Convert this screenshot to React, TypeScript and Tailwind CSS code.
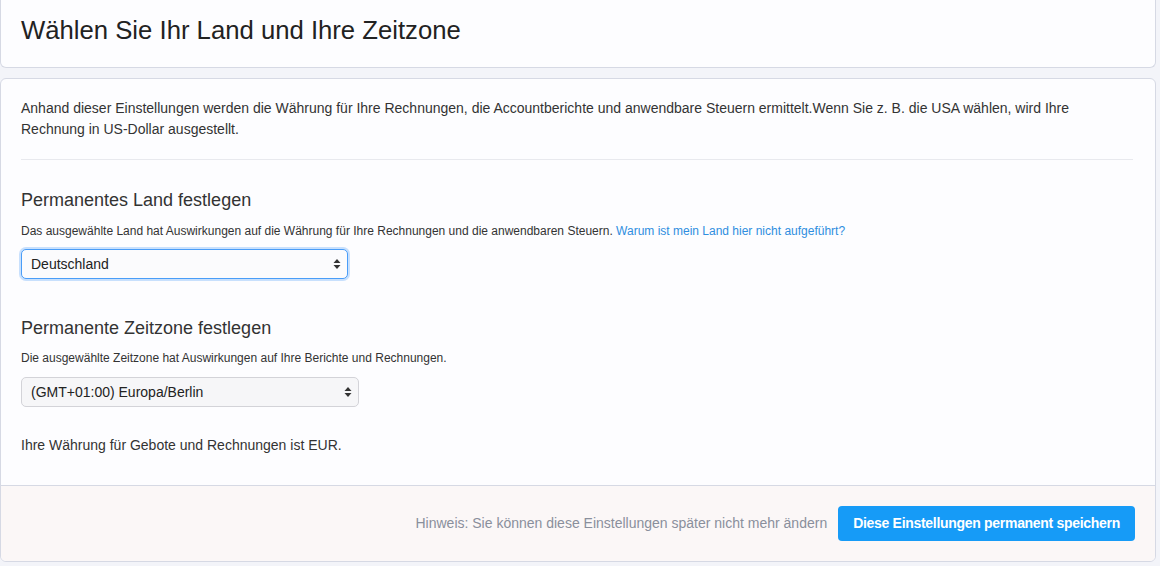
function Arrows() {
  return (
    <svg width="8" height="12" viewBox="0 0 8 12" className="shrink-0" aria-hidden>
      <path d="M4 1 L7.5 5 H0.5 Z" fill="#333" />
      <path d="M4 11 L7.5 7 H0.5 Z" fill="#333" />
    </svg>
  );
}

function FakeSelect({ value, focused = false, width }: { value: string; focused?: boolean; width: string }) {
  return (
    <div
      className={`flex h-[30px] items-center justify-between rounded-[5px] border pl-[9px] pr-[6px] text-[14px] text-[#222] ${width} ${
        focused
          ? "border-[#4a9df8] bg-[#fbfbfd] shadow-[0_0_0_2px_rgba(120,180,250,0.4)]"
          : "border-[#d3d3d8] bg-[#f6f6f8]"
      }`}
    >
      <span>{value}</span>
      <Arrows />
    </div>
  );
}

export default function App() {
  return (
    <div className="h-[566px] w-[1160px] overflow-hidden bg-[#f3f4f9] font-['Liberation_Sans',Arial,sans-serif] text-[#333]">
      <div className="w-[1156px]">
        <section className="h-[68px] rounded-b-[6px] border-x border-b border-[#d6d9e4] bg-[#fdfdff] pl-[20px] pt-[14px]">
          <h1 className="text-[25.7px] leading-[32px] text-[#222]">Wählen Sie Ihr Land und Ihre Zeitzone</h1>
        </section>

        <section className="mt-[10px] overflow-hidden rounded-[6px] border border-[#d6d9e4] bg-[#fdfdff]">
          <div className="px-[20px] pt-[19px]">
            <p className="text-[14px] leading-[21px] text-[#333]">
              Anhand dieser Einstellungen werden die Währung für Ihre Rechnungen, die Accountberichte und anwendbare Steuern ermittelt.Wenn Sie z. B. die USA wählen, wird Ihre
              <br />
              Rechnung in US-Dollar ausgestellt.
            </p>
            <div className="mt-[19px] h-px w-[1112px] bg-[#e8e9ee]" />

            <h2 className="mt-[30px] text-[18px] leading-[20px] text-[#333]">Permanentes Land festlegen</h2>
            <p className="mt-[14px] text-[12px] leading-[15px] text-[#333]">
              Das ausgewählte Land hat Auswirkungen auf die Währung für Ihre Rechnungen und die anwendbaren Steuern.{" "}
              <span className="text-[#2f8ee0]">Warum ist mein Land hier nicht aufgeführt?</span>
            </p>
            <div className="mt-[10px]">
              <FakeSelect value="Deutschland" focused width="w-[327px]" />
            </div>

            <h2 className="mt-[39px] text-[18px] leading-[20px] text-[#333]">Permanente Zeitzone festlegen</h2>
            <p className="mt-[13px] text-[12px] leading-[15px] text-[#333]">
              Die ausgewählte Zeitzone hat Auswirkungen auf Ihre Berichte und Rechnungen.
            </p>
            <div className="mt-[11px]">
              <FakeSelect value="(GMT+01:00) Europa/Berlin" width="w-[338px]" />
            </div>

            <p className="mt-[28px] pb-[29px] text-[14px] leading-[21px] text-[#333]">
              Ihre Währung für Gebote und Rechnungen ist EUR.
            </p>
          </div>

          <div className="flex h-[76px] items-center justify-end gap-[11px] border-t border-[#d6d9e4] bg-[#fbf7f7] pr-[20px]">
            <span className="text-[14px] text-[#8a8f9c]">Hinweis: Sie können diese Einstellungen später nicht mehr ändern</span>
            <button className="h-[35px] rounded-[4px] bg-[#169bf7] px-[15px] text-[14px] font-bold tracking-[-0.3px] text-white">
              Diese Einstellungen permanent speichern
            </button>
          </div>
        </section>
      </div>
    </div>
  );
}
